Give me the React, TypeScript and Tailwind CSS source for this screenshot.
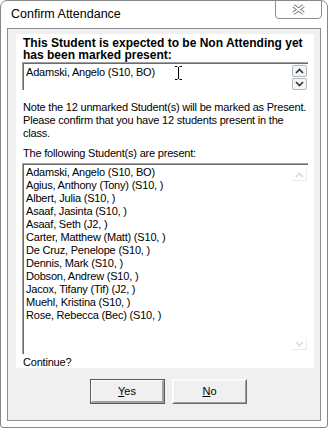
import React from 'react';

const students = [
  'Adamski, Angelo (S10, BO)',
  'Agius, Anthony (Tony) (S10, )',
  'Albert, Julia (S10, )',
  'Asaaf, Jasinta (S10, )',
  'Asaaf, Seth (J2, )',
  'Carter, Matthew (Matt) (S10, )',
  'De Cruz, Penelope (S10, )',
  'Dennis, Mark (S10, )',
  'Dobson, Andrew (S10, )',
  'Jacox, Tifany (Tif) (J2, )',
  'Muehl, Kristina (S10, )',
  'Rose, Rebecca (Bec) (S10, )',
];

function CloseGlyph() {
  return (
    <svg width="15" height="11" viewBox="0 0 15 11">
      <path d="M2.5 1.8 L12.5 9.2 M12.5 1.8 L2.5 9.2" stroke="#7c7c7c" strokeWidth="3.8" />
      <path d="M2.5 1.8 L12.5 9.2 M12.5 1.8 L2.5 9.2" stroke="#ffffff" strokeWidth="1.8" />
    </svg>
  );
}

function Chevron({ up, color }: { up?: boolean; color: string }) {
  return (
    <svg width="9" height="6" viewBox="0 0 9 6">
      <path d={up ? 'M1 5 L4.5 1.5 L8 5' : 'M1 1 L4.5 4.5 L8 1'} fill="none" stroke={color} strokeWidth="1.6" />
    </svg>
  );
}

function IBeam() {
  return (
    <svg width="9" height="16" viewBox="0 0 9 16" className="absolute left-[150px] top-[1px]">
      <path d="M1 1.5 H3.5 M5.5 1.5 H8 M4.5 2 V14 M1 14.5 H3.5 M5.5 14.5 H8" stroke="#000" strokeWidth="1" fill="none" />
    </svg>
  );
}

export default function App() {
  return (
    <div className="w-[328px] h-[428px] bg-white border border-[#878787] rounded-t-[7px] rounded-b-[3px] flex flex-col font-['Liberation_Sans',Arial,sans-serif] text-black overflow-hidden">
      {/* title bar */}
      <div className="h-[27px] flex items-start justify-between">
        <span className="pl-[10px] pt-[6px] text-[12.5px] leading-[14px]">Confirm Attendance</span>
        <div className="w-[47px] h-[19px] mr-[5px] -mt-px border border-[#8d8d8d] rounded-b-[4px] bg-white flex items-center justify-center">
          <CloseGlyph />
        </div>
      </div>

      {/* client area */}
      <div className="mx-[6px] flex-1 border border-[#8f8f8f] bg-[#f0f0f0] flex flex-col">
        <div className="ml-[8px] mr-[6px] mt-[5px] h-[334px] bg-white px-[6px] pt-[3px] text-[11px] tracking-[-0.2px]">
          <p className="pl-px text-[12px] tracking-normal font-bold leading-[12px]">
            This Student is expected to be Non Attending yet has been marked present:
          </p>

          {/* selected student box */}
          <div className="mt-px h-[28px] border-t border-l border-[#a0a0a0] bg-white">
            <div className="h-full border-t border-l border-[#6b6b6b] flex">
              <div className="relative flex-1 pl-[2px] pt-[2px] leading-[13px]">
                Adamski, Angelo (S10, BO)
                <IBeam />
              </div>
              <div className="w-[16px] flex flex-col gap-px pt-[1px]">
                <div className="h-[12px] w-[15px] border border-[#b4b8c0] rounded-[2px] bg-[#f4f5f7] flex items-center justify-center">
                  <Chevron up color="#333" />
                </div>
                <div className="h-[12px] w-[15px] border border-[#b4b8c0] rounded-[2px] bg-[#f4f5f7] flex items-center justify-center">
                  <Chevron color="#333" />
                </div>
              </div>
            </div>
          </div>

          <p className="mt-[11px] pl-px leading-[13px]">
            Note the 12 unmarked Student(s) will be marked as Present. Please confirm that you have 12 students present in the class.
          </p>

          <p className="mt-[7px] pl-px leading-[13px]">The following Student(s) are present:</p>

          {/* student list */}
          <div className="mt-[3px] h-[191px] border-t border-l border-[#a0a0a0] bg-white">
            <div className="h-full border-t border-l border-[#6b6b6b] flex">
              <ul className="flex-1 pl-[2px] pt-[1px] leading-[13px]">
                {students.map((s) => (
                  <li key={s}>{s}</li>
                ))}
              </ul>
              <div className="w-[16px] flex flex-col justify-between py-[4px]">
                <div className="h-[12px] w-[15px] border-b border-r border-[#ececec] flex items-center justify-center">
                  <Chevron up color="#dadada" />
                </div>
                <div className="h-[12px] w-[15px] border-b border-r border-[#ececec] flex items-center justify-center">
                  <Chevron color="#dadada" />
                </div>
              </div>
            </div>
          </div>

          <p className="mt-[2px] pl-px leading-[13px]">Continue?</p>
        </div>

        {/* buttons */}
        <div className="mt-[11px] pl-[82px] flex gap-[7px] text-[11px]">
          <button className="w-[75px] h-[25px] border border-[#5a5a5a] bg-[#f0f0f0]">
            <div className="h-full border-t border-l border-white border-b-2 border-r-2 border-b-[#a0a0a0] border-r-[#a0a0a0] flex items-center justify-center">
              <span><span className="underline">Y</span>es</span>
            </div>
          </button>
          <button className="w-[75px] h-[25px] border-t border-l border-white border-b border-r border-b-[#696969] border-r-[#696969] bg-[#f0f0f0]">
            <div className="h-full border-t border-l border-[#f8f8f8] border-b border-r border-b-[#a0a0a0] border-r-[#a0a0a0] flex items-center justify-center">
              <span><span className="underline">N</span>o</span>
            </div>
          </button>
        </div>
      </div>
      <div className="h-[6px]" />
    </div>
  );
}
